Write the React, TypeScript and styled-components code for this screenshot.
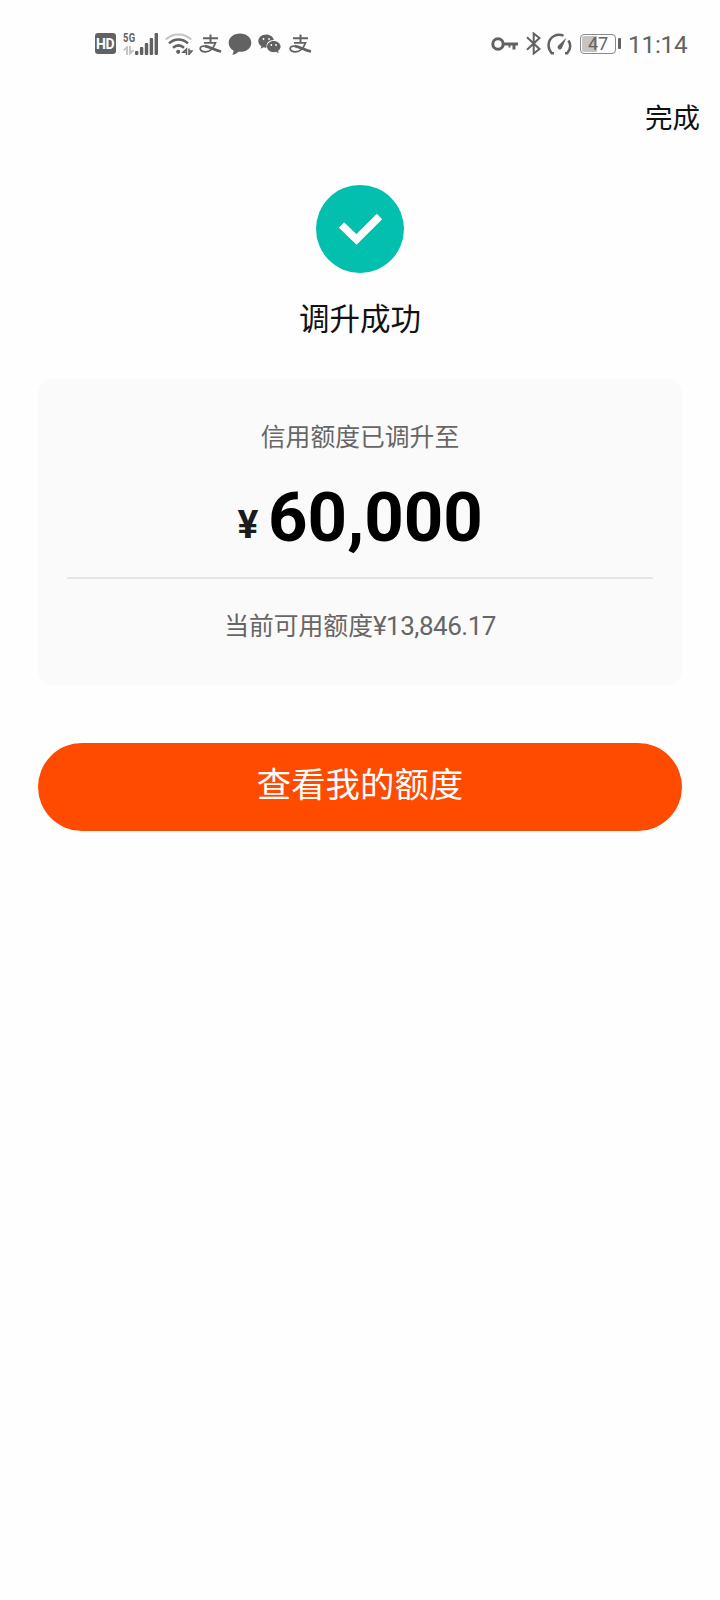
import React from "react";
import styled, { createGlobalStyle } from "styled-components";

const GlobalStyle = createGlobalStyle`
  * { box-sizing: border-box; }
  body {
    margin: 0;
    background: #fefefe;
    font-family: Roboto, "Noto Sans CJK SC", sans-serif;
    color: #111;
  }
`;

const INK = "#626262";

const Screen = styled.main`
  width: 720px;
  min-height: 1600px;
  display: flex;
  flex-direction: column;
`;

const StatusBar = styled.header`
  height: 88px;
  padding: 0 33px 0 94.5px;
  display: flex;
  justify-content: space-between;
  color: ${INK};
`;

const StatusGroup = styled.div`
  height: 87px;
  display: flex;
  align-items: center;
`;

const Glyph = styled.svg<{ $gap?: number }>`
  flex: none;
  display: block;
  margin-left: ${(p) => p.$gap ?? 0}px;
`;

const HdBadge = styled.span`
  width: 21px;
  height: 21px;
  border-radius: 3px;
  background: ${INK};
  color: #fff;
  font: 700 14px/22px Roboto, sans-serif;
  text-align: center;
  letter-spacing: -0.4px;
`;

const Network = styled.div`
  width: 12px;
  height: 23px;
  margin-left: 7.5px;
  display: flex;
  flex-direction: column;
  justify-content: space-between;
`;

const NetworkLabel = styled.span`
  font: 700 13px/12px Roboto, sans-serif;
  letter-spacing: 0.6px;
  transform: scaleX(0.72);
  transform-origin: left;
`;

const Battery = styled.div`
  width: 36px;
  height: 20px;
  margin-left: 8px;
  padding: 1px;
  border: 1.5px solid #8a8a8a;
  border-radius: 4px;
  font-size: 18px;
  line-height: 16px;
  text-align: center;
  background: linear-gradient(90deg, #c4c4c4 47%, #fefefe 47%) content-box;
`;

const BatteryNub = styled.i`
  width: 3px;
  height: 11px;
  margin-left: 2px;
  border-radius: 1px;
  background: ${INK};
`;

const Time = styled.time`
  margin-left: 7px;
  width: 59px;
  font-size: 24.3px;
  line-height: 30px;
  letter-spacing: -0.2px;
  padding-top: 3px;
  white-space: nowrap;
`;

const NavBar = styled.nav`
  height: 58px;
  padding: 11px 20px 0 0;
  display: flex;
  justify-content: flex-end;
  align-items: flex-start;
`;

const DoneButton = styled.button`
  border: 0;
  padding: 0;
  background: none;
  color: #111;
  font: 400 27.5px/40px Roboto, "Noto Sans CJK SC", sans-serif;
`;

const Result = styled.section`
  padding-top: 39px;
  display: flex;
  flex-direction: column;
  align-items: center;
`;

const Title = styled.h1`
  margin: 24px 0 0;
  font-size: 30.5px;
  font-weight: 400;
  line-height: 46px;
`;

const Card = styled.section`
  height: 306px;
  margin: 36px 38px 0;
  padding: 41px 29px 0;
  border-radius: 15px;
  background: #fafafa;
  display: flex;
  flex-direction: column;
  text-align: center;
`;

const Caption = styled.p`
  margin: 0;
  font-size: 24.8px;
  line-height: 36px;
  color: #666;
`;

const Balance = styled.span`
  font-size: 26px;
  line-height: 30px;
  letter-spacing: -0.5px;
`;

const Amount = styled.div`
  height: 121px;
  padding-top: 22px;
  display: flex;
  justify-content: center;
  align-items: baseline;
  gap: 9px;
  font-weight: 700;
  line-height: 80px;
`;

const Currency = styled.span`
  position: relative;
  top: -3px;
  width: 22px;
  font-size: 39px;
  line-height: 40px;
  color: #1c1c1c;
`;

const Figure = styled.span`
  font-size: 69px;
  color: #000;
`;

const Divider = styled.hr`
  width: 100%;
  height: 2px;
  margin: 0 0 30px;
  border: 0;
  background: #e5e5e5;
`;

const PrimaryButton = styled.button`
  height: 88px;
  margin: 58px 38px 0;
  padding: 0 0 4px;
  border: 0;
  border-radius: 44px;
  background: #ff4b00;
  color: #fff;
  font: 400 34.4px/50px Roboto, "Noto Sans CJK SC", sans-serif;
`;

const DataArrows = () => (
  <Glyph width="12" height="9" viewBox="0 0 12 9" fill="none" stroke="#c0c0c0" strokeWidth="1.800">
    <path d="M4 9V1L.8 4.500M7 0v7.500L10.500 4" />
  </Glyph>
);

const SignalBars = () => (
  <Glyph width="23" height="22" viewBox="0 0 23 22" fill={INK}>
    <rect x="0" y="18" width="3.400" height="4" rx="1" />
    <rect x="4.900" y="14" width="3.400" height="8" rx="1" />
    <rect x="9.800" y="10" width="3.400" height="12" rx="1" />
    <rect x="14.700" y="5" width="3.400" height="17" rx="1" />
    <rect x="19.600" y="0" width="3.400" height="22" rx="1" />
  </Glyph>
);

const Wifi = () => (
  <Glyph $gap={7} width="28" height="22" viewBox="0 0 28 22" fill="none" strokeWidth="2">
    <path d="M.7 6.500C8-.2 19-.2 26.300 6.500" stroke="#c4c4c4" />
    <path d="M4 10.300c5.500-5.200 13.500-5.200 19 0M8 14.800c3.400-3 7.600-3 11 0" stroke={INK} strokeWidth="2.500" />
    <circle cx="13.200" cy="18.800" r="2.100" fill={INK} />
    <path d="M21.500 22v-6l-3.500 3.200h3.500M24 15.500v6l3-3.500h-3" stroke={INK} strokeWidth="1.500" />
  </Glyph>
);

const Alipay = ({ gap }: { gap: number }) => (
  <Glyph $gap={gap} width="23" height="20" viewBox="0 0 23 20" fill="none" stroke={INK}>
    <path d="M4 4.300h15M11.500.5v8.300" strokeWidth="2" />
    <path d="M5 8.800h11.500c-1.500 4.200-5 9-10 9-3.500 0-5.300-1.300-5.300-3.200 0-1.800 2-2.800 4.700-2.500" strokeWidth="1.800" />
    <path d="M5.800 12.100c5.500.6 9 4 16.200 5.400" strokeWidth="2.600" />
  </Glyph>
);

const Bubble = () => (
  <Glyph $gap={5.5} width="24" height="22" viewBox="0 0 24 22" fill={INK}>
    <path d="M12 0.500C5.500.5.700 4.500.700 9.700c0 3.400 1.800 6.200 4.800 7.900.2 1.700-.4 3-1.200 4.200 2.600-.3 4.700-1.400 6.200-3 7.500.6 12.800-3.500 12.800-9.100C23.300 4.500 18.500.5 12 .5z" />
  </Glyph>
);

const Wechat = () => (
  <Glyph $gap={6} width="23" height="20" viewBox="0 0 23 20" fill={INK}>
    <path d="M8.300.5C3.900.5.300 3.300.300 7c0 2.200 1.200 4 3.100 5.200l-.8 2.600 3-1.500c.9.300 2 .4 3.100.3C7.700 9.300 11 5.900 15.900 6 15 2.800 12 .5 8.300.5z" />
    <path d="M15.700 7C11.900 7 9 9.500 9 12.600s2.900 5.600 6.700 5.600c.8 0 1.600-.1 2.300-.4l2.700 1.500-.7-2.400c1.600-1 2.600-2.500 2.600-4.300C22.600 9.500 19.500 7 15.700 7z" />
    <g fill="#fff">
      <circle cx="5.500" cy="5" r="0.900" />
      <circle cx="11" cy="5" r="0.900" />
      <circle cx="13.300" cy="11" r="0.900" />
      <circle cx="18" cy="11" r="0.900" />
    </g>
  </Glyph>
);

const Key = () => (
  <Glyph width="27" height="14" viewBox="0 0 27 14" fill="none" stroke={INK} strokeWidth="3">
    <circle cx="7" cy="7" r="5.200" />
    <path d="M12 7h15M23 7v5.500" />
    <path d="M18.500 7v3.500" strokeWidth="2" />
  </Glyph>
);

const Bluetooth = () => (
  <Glyph $gap={8} width="15" height="23" viewBox="0 0 15 23" fill="none" stroke={INK} strokeWidth="2">
    <path d="M1 5.200 13.500 17l-5.800 4.500v-20L13.500 6 1 17.800" />
  </Glyph>
);

const Gauge = () => (
  <Glyph $gap={6} width="25" height="22" viewBox="0 0 25 22" fill="none" stroke={INK} strokeWidth="2.500">
    <path d="M7 20.300H4.800C-.3 14.500.8 6.500 7 3c3-1.500 6.500-1.600 9.500-.3M21.500 7.500c2.500 4.300 2 9-1.300 12.800h-2.200" />
    <path d="M19.500 4.500 14.800 15.300a2.200 2.200 0 0 1-3.900-2.200z" fill={INK} stroke="none" />
  </Glyph>
);

const SuccessMark = () => (
  <Glyph width="88" height="88" viewBox="0 0 88 88">
    <circle cx="44" cy="44" r="44" fill="#03bfae" />
    <path d="M25.500 40 40.500 54.500 63.500 31.500" fill="none" stroke="#fff" strokeWidth="7.500" />
  </Glyph>
);

export default function App() {
  return (
    <>
      <GlobalStyle />
      <Screen>
        <StatusBar>
          <StatusGroup>
            <HdBadge>HD</HdBadge>
            <Network>
              <NetworkLabel>5G</NetworkLabel>
              <DataArrows />
            </Network>
            <SignalBars />
            <Wifi />
            <Alipay gap={6} />
            <Bubble />
            <Wechat />
            <Alipay gap={8} />
          </StatusGroup>
          <StatusGroup>
            <Key />
            <Bluetooth />
            <Gauge />
            <Battery>47</Battery>
            <BatteryNub />
            <Time>11:14</Time>
          </StatusGroup>
        </StatusBar>
        <NavBar>
          <DoneButton>完成</DoneButton>
        </NavBar>
        <Result>
          <SuccessMark />
          <Title>调升成功</Title>
        </Result>
        <Card>
          <Caption>信用额度已调升至</Caption>
          <Amount>
            <Currency>¥</Currency>
            <Figure>60,000</Figure>
          </Amount>
          <Divider />
          <Caption>
            当前可用额度<Balance>¥13,846.17</Balance>
          </Caption>
        </Card>
        <PrimaryButton>查看我的额度</PrimaryButton>
      </Screen>
    </>
  );
}
